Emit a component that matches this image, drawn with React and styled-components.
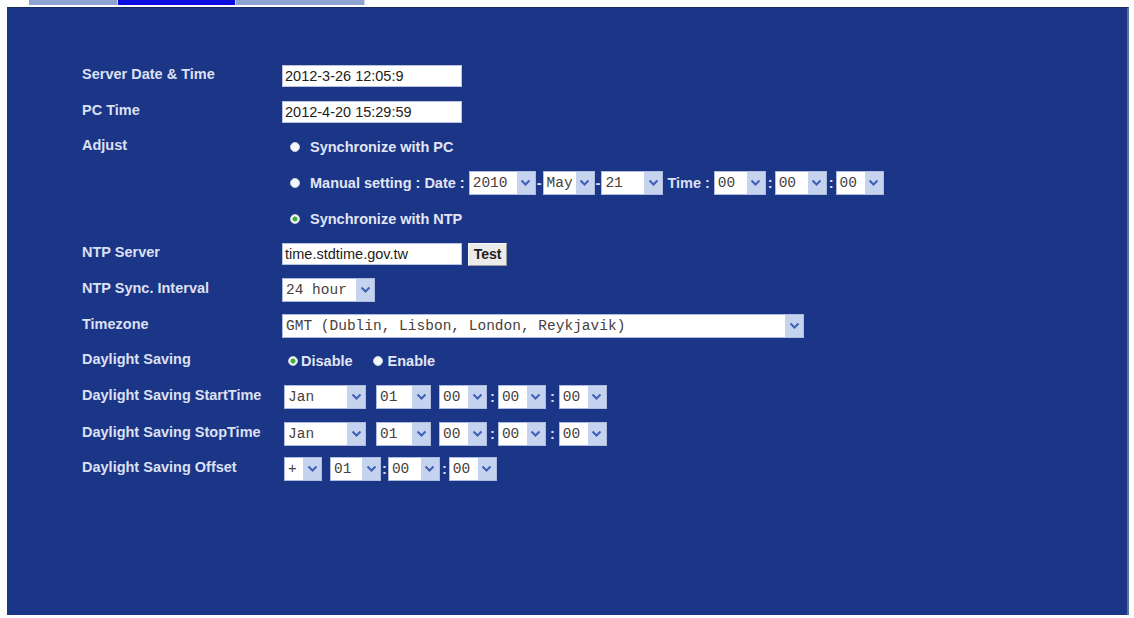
import React from "react"
import styled, { createGlobalStyle } from "styled-components"

const GlobalStyle = createGlobalStyle`
  html, body {
    margin: 0;
    padding: 0;
    background: #fdfdfd;
  }
  body {
    font-family: "Liberation Sans", Arial, sans-serif;
  }
`

const Page = styled.div`
  width: 1134px;
  height: 618px;
  overflow: hidden;
`

const TabStrip = styled.div`
  display: flex;
  margin-left: 29px;
  height: 5px;
`

const Tab = styled.div`
  width: ${(p) => p.w}px;
  height: 100%;
  background: ${(p) => (p.active ? "#0b0ce0" : "#8fa3d2")};
  border-right: 1px solid #c9d3ea;
`

const Panel = styled.div`
  box-sizing: border-box;
  margin: 2px 0 0 7px;
  width: 1122px;
  height: 608px;
  background: #1b3587;
  border-top: 1px solid #15295f;
  border-right: 2px solid #5f6f9c;
  padding: 50px 0 0 75px;
`

const Form = styled.div`
  display: flex;
  flex-direction: column;
`

const Row = styled.div`
  display: grid;
  grid-template-columns: 200px 1fr;
  align-items: center;
  height: ${(p) => p.h || 36}px;
`

const Label = styled.div`
  font-size: 14.5px;
  font-weight: bold;
  color: #dce0f3;
  padding-bottom: 4px;
  white-space: nowrap;
`

const Field = styled.div`
  display: flex;
  align-items: center;
  margin-left: ${(p) => p.indent || 0}px;
`

const TextBox = styled.div`
  box-sizing: border-box;
  width: ${(p) => p.w || 180}px;
  height: 22px;
  background: #fff;
  border: 1px solid #b9c3dd;
  padding-left: 2px;
  font-size: 14.5px;
  line-height: 20px;
  color: #241c18;
  white-space: nowrap;
`

const Button = styled.div`
  box-sizing: border-box;
  margin-left: 6px;
  width: 39px;
  height: 23px;
  background: #ebebeb;
  border: 1px solid #f8f8f8;
  border-right-color: #9a9a9a;
  border-bottom-color: #9a9a9a;
  font-size: 14px;
  font-weight: bold;
  line-height: 21px;
  text-align: center;
  color: #222;
`

const SelectBox = styled.div`
  box-sizing: border-box;
  display: flex;
  width: ${(p) => p.w}px;
  height: 24px;
  background: #fff;
  border: 1px solid #aebbe0;
`

const SelectText = styled.div`
  flex: 1;
  padding-left: 3px;
  font-family: "Liberation Mono", "Courier New", monospace;
  font-size: 14.5px;
  line-height: 22px;
  color: #48413c;
  white-space: nowrap;
  overflow: hidden;
`

const Arrow = styled.div`
  width: 18px;
  height: 100%;
  background: #c6d3ef;
  display: flex;
  align-items: center;
  justify-content: center;
`

const Sep = styled.span`
  font-size: 14.5px;
  font-weight: bold;
  color: #dce0f3;
  padding: 0 ${(p) => (p.pad != null ? p.pad : 1)}px;
`

const RadioLine = styled.div`
  display: flex;
  align-items: center;
  margin-left: ${(p) => p.indent || 0}px;
  margin-right: ${(p) => p.after || 0}px;
`

const Dot = styled.span`
  box-sizing: border-box;
  width: 10px;
  height: 10px;
  border-radius: 50%;
  border: 1px solid #c9cfe2;
  background: ${(p) =>
    p.checked
      ? "radial-gradient(circle, #3fae3a 0 2.2px, #f4f8f2 2.8px)"
      : "#f6f7fb"};
  margin-right: ${(p) => (p.gap != null ? p.gap : 10)}px;
`

const RadioText = styled.span`
  font-size: 14.5px;
  font-weight: bold;
  color: #e2e5f5;
  white-space: nowrap;
`

function Chevron() {
  return (
    <svg width="11" height="8" viewBox="0 0 11 8">
      <path d="M1.5 1.5 L5.5 5.5 L9.5 1.5" fill="none" stroke="#3e5fb8" strokeWidth="2" />
    </svg>
  )
}

function Select({ w, value }) {
  return (
    <SelectBox w={w}>
      <SelectText>{value}</SelectText>
      <Arrow>
        <Chevron />
      </Arrow>
    </SelectBox>
  )
}

function Radio({ checked, text, indent, gap, after }) {
  return (
    <RadioLine indent={indent} after={after}>
      <Dot checked={checked} gap={gap} />
      <RadioText>{text}</RadioText>
    </RadioLine>
  )
}

function TimeSelects({ month }) {
  return (
    <Field indent={2}>
      <Select w={82} value={month} />
      <Sep pad={3}>&nbsp;</Sep>
      <Select w={55} value="01" />
      <Sep pad={2}>&nbsp;</Sep>
      <Select w={48} value="00" />
      <Sep pad={3}>:</Sep>
      <Select w={48} value="00" />
      <Sep pad={4}>:</Sep>
      <Select w={48} value="00" />
    </Field>
  )
}

export default function App() {
  return (
    <Page>
      <GlobalStyle />
      <TabStrip>
        <Tab w={88} />
        <Tab w={117} active />
        <Tab w={128} />
      </TabStrip>
      <Panel>
        <Form>
          <Row h={36}>
            <Label>Server Date &amp; Time</Label>
            <Field>
              <TextBox>2012-3-26 12:05:9</TextBox>
            </Field>
          </Row>
          <Row h={36}>
            <Label>PC Time</Label>
            <Field>
              <TextBox>2012-4-20 15:29:59</TextBox>
            </Field>
          </Row>
          <Row h={34}>
            <Label>Adjust</Label>
            <Radio indent={8} text="Synchronize with PC" />
          </Row>
          <Row h={37}>
            <span />
            <Field>
              <Radio indent={8} text="Manual setting : Date :" after={4} />
              <Select w={67} value="2010" />
              <Sep>-</Sep>
              <Select w={52} value="May" />
              <Sep>-</Sep>
              <Select w={62} value="21" />
              <Sep pad={4}>Time :</Sep>
              <Select w={52} value="00" />
              <Sep pad={2}>:</Sep>
              <Select w={52} value="00" />
              <Sep pad={2}>:</Sep>
              <Select w={48} value="00" />
            </Field>
          </Row>
          <Row h={35}>
            <span />
            <Radio indent={8} checked text="Synchronize with NTP" />
          </Row>
          <Row h={36}>
            <Label>NTP Server</Label>
            <Field>
              <TextBox>time.stdtime.gov.tw</TextBox>
              <Button>Test</Button>
            </Field>
          </Row>
          <Row h={36}>
            <Label>NTP Sync. Interval</Label>
            <Field>
              <Select w={93} value="24 hour" />
            </Field>
          </Row>
          <Row h={36}>
            <Label>Timezone</Label>
            <Field>
              <Select w={522} value="GMT (Dublin, Lisbon, London, Reykjavik)" />
            </Field>
          </Row>
          <Row h={34}>
            <Label>Daylight Saving</Label>
            <Field>
              <Radio indent={6} gap={3} checked text="Disable" after={20} />
              <Radio gap={5} text="Enable" />
            </Field>
          </Row>
          <Row h={38}>
            <Label>Daylight Saving StartTime</Label>
            <TimeSelects month="Jan" />
          </Row>
          <Row h={36}>
            <Label>Daylight Saving StopTime</Label>
            <TimeSelects month="Jan" />
          </Row>
          <Row h={34}>
            <Label>Daylight Saving Offset</Label>
            <Field indent={2}>
              <Select w={38} value="+" />
              <Sep pad={2}>&nbsp;</Sep>
              <Select w={51} value="01" />
              <Sep pad={1}>:</Sep>
              <Select w={52} value="00" />
              <Sep pad={2}>:</Sep>
              <Select w={48} value="00" />
            </Field>
          </Row>
        </Form>
      </Panel>
    </Page>
  )
}
